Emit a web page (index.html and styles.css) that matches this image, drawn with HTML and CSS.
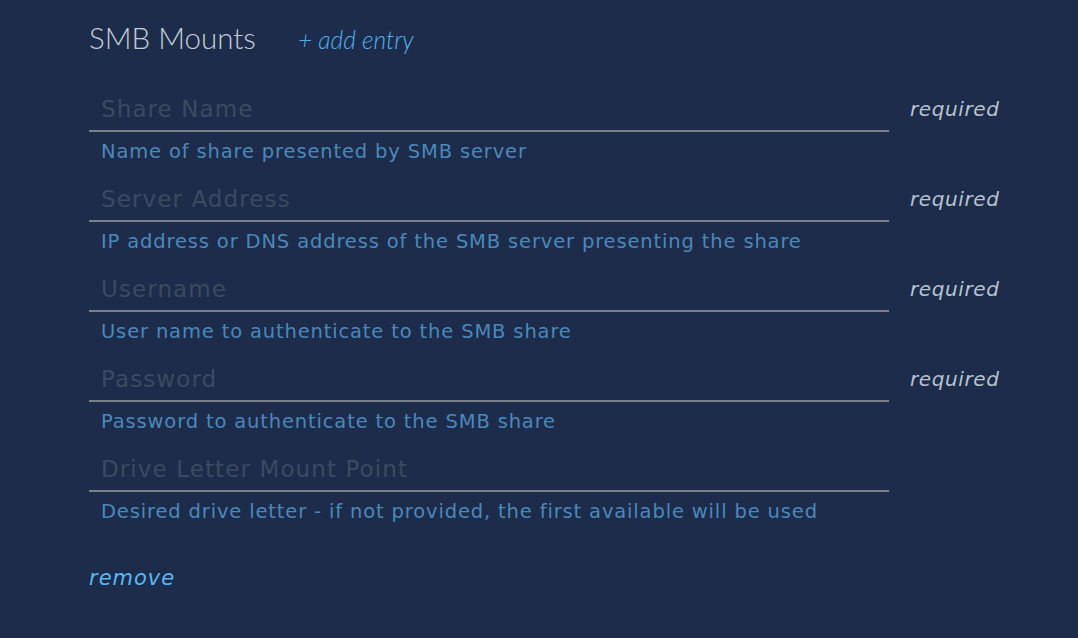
FILE: index.html
```html
<!DOCTYPE html>
<html>
<head>
<meta charset="utf-8">
<link rel="stylesheet" href="styles.css">
</head>
<body>
<div class="page">
  <div class="header">
    <h2 class="title">SMB Mounts</h2>
    <a class="add">+ add entry</a>
  </div>
  <div class="fields">
    <div class="row">
      <div class="field">
        <div class="input">Share Name</div>
        <div class="help">Name of share presented by SMB server</div>
      </div>
      <div class="req">required</div>
    </div>
    <div class="row">
      <div class="field">
        <div class="input">Server Address</div>
        <div class="help">IP address or DNS address of the SMB server presenting the share</div>
      </div>
      <div class="req">required</div>
    </div>
    <div class="row">
      <div class="field">
        <div class="input">Username</div>
        <div class="help">User name to authenticate to the SMB share</div>
      </div>
      <div class="req">required</div>
    </div>
    <div class="row">
      <div class="field">
        <div class="input">Password</div>
        <div class="help">Password to authenticate to the SMB share</div>
      </div>
      <div class="req">required</div>
    </div>
    <div class="row">
      <div class="field">
        <div class="input">Drive Letter Mount Point</div>
        <div class="help">Desired drive letter - if not provided, the first available will be used</div>
      </div>
    </div>
  </div>
  <a class="remove">remove</a>
</div>
</body>
</html>
```
FILE: styles.css
```css
html, body {
  margin: 0;
  padding: 0;
  background: #1e2c4b;
  height: 100%;
}
.page {
  padding: 15px 0 0 89px;
  font-family: "DejaVu Sans", sans-serif;
}
.header {
  display: flex;
  align-items: center;
  gap: 42px;
  height: 44px;
}
.title {
  margin: 0;
  font-family: Lato, sans-serif;
  font-weight: 300;
  font-size: 29.5px;
  color: #c4ccd6;
}
.add {
  font-family: Lato, sans-serif;
  font-style: italic;
  font-weight: 300;
  font-size: 24.5px;
  color: #4fb0ee;
  padding-top: 4px;
}
.fields {
  margin-top: 29px;
}
.row {
  display: flex;
  align-items: flex-start;
  height: 90px;
}
.field {
  width: 800px;
}
.input {
  box-sizing: border-box;
  border-bottom: 2px solid #7a8287;
  padding: 6px 0 0 12px;
  font-size: 23px;
  letter-spacing: 1.1px;
  line-height: 30px;
  color: #3b4a60;
  height: 44px;
}
.help {
  padding: 8px 0 0 12px;
  font-size: 19.5px;
  letter-spacing: 0.85px;
  line-height: 24px;
  color: #4a88bb;
}
.req {
  margin-left: 21px;
  padding-top: 6px;
  font-style: italic;
  font-size: 20px;
  letter-spacing: 0.6px;
  line-height: 30px;
  color: #b7c2cf;
}
.remove {
  display: block;
  margin-top: 28px;
  font-style: italic;
  font-size: 21px;
  letter-spacing: 1px;
  color: #58b8f2;
}
```
